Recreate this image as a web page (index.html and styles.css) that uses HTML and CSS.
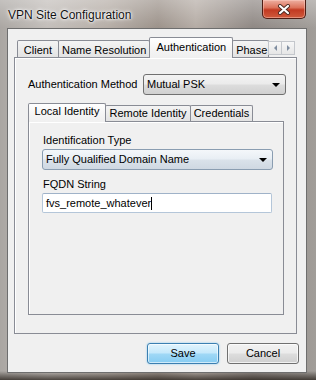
FILE: index.html
```html
<!DOCTYPE html>
<html>
<head lang="en">
    <meta charset="UTF-8">
    <title>VPN Site Configuration</title>
    <link rel="stylesheet" href="styles.css">
</head>
<body>
    <div class="window">
        <div class="titlebar">
            <span class="title">VPN Site Configuration</span>
            <span class="close">
                <svg width="14" height="11" viewBox="0 0 14 11">
                    <path d="M3 2 L11 9 M11 2 L3 9" stroke="#4a2a22" stroke-width="4" stroke-linecap="round"/>
                    <path d="M3 2 L11 9 M11 2 L3 9" stroke="#fff" stroke-width="2.2" stroke-linecap="round"/>
                </svg>
            </span>
        </div>
        <div class="client">
            <div class="tabview outer">
                <div class="tabs">
                    <span class="tab t-client">Client</span>
                    <span class="tab t-name">Name Resolution</span>
                    <span class="tab current t-auth">Authentication</span>
                    <span class="tab t-phase">Phase</span>
                    <span class="spin">
                        <span class="spinbtn"><i class="arr-left"></i></span>
                        <span class="spinbtn"><i class="arr-right"></i></span>
                    </span>
                </div>
                <div class="panel">
                    <div class="row">
                        <span class="label">Authentication Method</span>
                        <div class="combo c-method">Mutual PSK<i class="drop"></i></div>
                    </div>
                    <div class="tabview inner">
                        <div class="tabs">
                            <span class="tab current t-local">Local Identity</span>
                            <span class="tab t-remote">Remote Identity</span>
                            <span class="tab t-cred">Credentials</span>
                        </div>
                        <div class="panel">
                            <span class="label">Identification Type</span>
                            <div class="combo blue c-type">Fully Qualified Domain Name<i class="drop"></i></div>
                            <span class="label second">FQDN String</span>
                            <div class="edit">fvs_remote_whatever<span class="caret"></span></div>
                        </div>
                    </div>
                </div>
            </div>
            <div class="buttons">
                <span class="btn default">Save</span>
                <span class="btn">Cancel</span>
            </div>
        </div>
    </div>
</body>
</html>
```

FILE: styles.css
```css
* {
    margin: 0;
    padding: 0;
    box-sizing: border-box;
}
body {
    font-family: "Liberation Sans", Arial, sans-serif;
    font-size: 11px;
    color: #000;
    background: #fff;
}
.window {
    width: 316px;
    height: 380px;
    display: flex;
    flex-direction: column;
    background:
        linear-gradient(0deg, rgba(35, 28, 22, 0.75) 0, rgba(35, 28, 22, 0.35) 5px, rgba(35, 28, 22, 0) 9px),
        linear-gradient(180deg, rgba(255, 255, 255, 0.3) 0, rgba(255, 255, 255, 0) 28px),
        linear-gradient(90deg, #aaa6a2 0%, #c3beba 15%, #b6aea7 34%, #9c928a 50%, #b5aca5 62%, #8f8884 80%, #a19d99 100%);
}
/* 标题栏 */
.titlebar {
    height: 28px;
    display: flex;
    align-items: flex-start;
    padding-left: 8px;
}
.title {
    margin-top: 8px;
    font-size: 12px;
    line-height: 14px;
    color: #111;
    text-shadow: 0 0 5px #fff, 0 0 3px #fff, 0 0 1px #fff;
}
.close {
    margin-left: auto;
    margin-right: 10px;
    width: 44px;
    height: 19px;
    display: flex;
    align-items: center;
    justify-content: center;
    border: 1px solid #4e1d14;
    border-top: none;
    border-radius: 0 0 5px 5px;
    background: linear-gradient(#eeb0a2, #dc735c 42%, #c23a22 55%, #cf5a3c 100%);
    box-shadow: inset 0 0 0 1px rgba(255, 210, 200, 0.45);
}
.close svg {
    display: block;
}
/* 客户区 */
.client {
    flex: 1;
    margin: 0 9px 7px 7px;
    border: 1px solid #6e6e6e;
    background: #f0f0f0;
    padding: 8px 9px 8px 6px;
    display: flex;
    flex-direction: column;
}
.tabview {
    display: flex;
    flex-direction: column;
}
.outer {
    flex: 1;
}
.tabs {
    display: flex;
    align-items: flex-end;
    height: 20px;
    padding-left: 3px;
}
.tab {
    height: 17px;
    padding-top: 2px;
    line-height: 14px;
    text-align: center;
    white-space: nowrap;
    border: 1px solid #898c95;
    border-bottom: none;
    border-radius: 2px 2px 0 0;
    background: linear-gradient(#f4f4f4, #e3e3e3);
    margin-left: -1px;
}
.tab.current {
    position: relative;
    z-index: 1;
    height: 21px;
    margin-bottom: -1px;
    background: linear-gradient(#ffffff, #f4f4f4 60%, #f0f0f0);
}
.t-client { width: 42px; margin-left: 0; }
.t-name { width: 93px; }
.t-auth { width: 84px; }
.t-phase {
    width: 37px;
    overflow: hidden;
    text-align: left;
    padding-left: 3px;
}
.spin {
    align-self: flex-start;
    margin-top: 4px;
    margin-right: 2px;
    display: flex;
    position: relative;
    z-index: 2;
}
.spinbtn {
    width: 14px;
    height: 14px;
    border: 1px solid #c4c7cc;
    background: linear-gradient(#f7f7f7, #e6e6e6);
    display: flex;
    align-items: center;
    justify-content: center;
    margin-left: -1px;
}
.arr-left,
.arr-right {
    width: 0;
    height: 0;
    border-top: 3px solid transparent;
    border-bottom: 3px solid transparent;
}
.arr-left { border-right: 3px solid #7f8da0; }
.arr-right { border-left: 3px solid #7f8da0; }
.panel {
    flex: 1;
    border: 1px solid #898c95;
    box-shadow: inset 1px 1px 0 #fff;
    background: #f0f0f0;
    padding: 16px 10px 18px 13px;
    display: flex;
    flex-direction: column;
}
.row {
    display: flex;
    align-items: center;
    height: 21px;
}
.label {
    line-height: 13px;
}
/* 下拉框 */
.combo {
    position: relative;
    height: 21px;
    line-height: 19px;
    padding-left: 3px;
    border: 1px solid #707070;
    border-radius: 3px;
    background: linear-gradient(#f3f3f3, #ebebeb 48%, #dddddd 52%, #d0d0d0);
}
.c-method {
    width: 143px;
    margin-left: auto;
}
.combo.blue {
    border-color: #8a9db1;
    background: linear-gradient(#f4f7fa, #e8eef4 48%, #dae2ea 52%, #cfd8e2);
}
.drop {
    position: absolute;
    right: 5px;
    top: 8px;
    width: 0;
    height: 0;
    border-left: 4px solid transparent;
    border-right: 4px solid transparent;
    border-top: 4px solid #000;
}
/* 内层标签页 */
.inner {
    flex: 1;
    margin-top: 8px;
    margin-right: 2px;
}
.inner .tabs {
    height: 18px;
    padding-left: 0;
}
.inner .tab {
    height: 16px;
    padding-top: 0;
}
.inner .tab.current {
    height: 19px;
}
.t-local { width: 78px; margin-left: 0; }
.t-remote { width: 86px; }
.t-cred { width: 63px; }
.inner .panel {
    padding: 12px 11px 0 13px;
}
.inner .label {
    padding-left: 1px;
}
.c-type {
    width: 231px;
    margin-top: 2px;
}
.second {
    margin-top: 8px;
}
.edit {
    width: 230px;
    height: 20px;
    margin-top: 2px;
    padding-left: 3px;
    line-height: 18px;
    background: #fff;
    border: 1px solid #b4c6d9;
    border-top-color: #9fb2c8;
    border-radius: 2px;
    display: flex;
    align-items: center;
}
.caret {
    display: inline-block;
    width: 1px;
    height: 13px;
    background: #000;
}
/* 按钮 */
.buttons {
    display: flex;
    justify-content: flex-end;
    gap: 8px;
    margin-top: 9px;
    margin-right: -2px;
}
.btn {
    width: 72px;
    height: 21px;
    line-height: 19px;
    text-align: center;
    border: 1px solid #707070;
    border-radius: 3px;
    background: linear-gradient(#f2f2f2, #ebebeb 48%, #dddddd 52%, #cfcfcf);
    box-shadow: inset 0 0 0 1px rgba(255, 255, 255, 0.7);
}
.btn.default {
    border-color: #3c7fb1;
    background: linear-gradient(#e2f4fd, #c4e8fb 48%, #a0d8f6 52%, #86ccf2);
    box-shadow: inset 0 0 0 1px rgba(255, 255, 255, 0.6), 0 0 2px #7fc6ee;
}
```
